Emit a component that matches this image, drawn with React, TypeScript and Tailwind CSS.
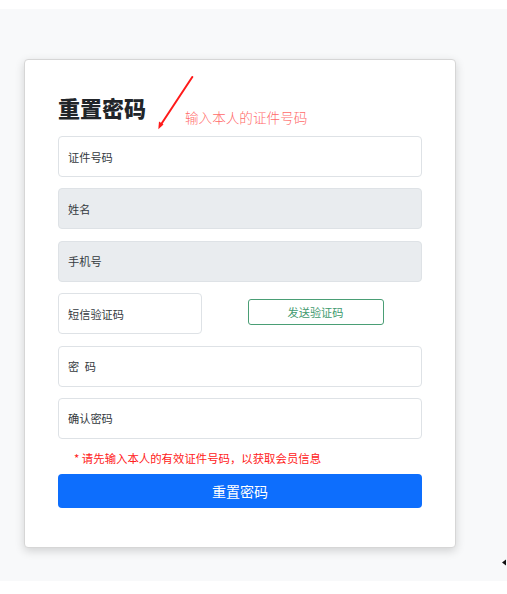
import React from 'react';

const font = { fontFamily: '"Noto Sans CJK SC", "Noto Sans", sans-serif' };

function Field({ placeholder, grey }: { placeholder: string; grey?: boolean }) {
	return (
		<input
			type="text"
			readOnly={grey}
			placeholder={placeholder}
			className={`block w-full h-[41px] px-[9px] border border-[#dee2e6] rounded-[4px] text-[11.2px] text-[#212529] placeholder:text-[#343a40] outline-none ${grey ? 'bg-[#e9ecef]' : 'bg-white'}`}
		/>
	);
}

export default function App() {
	return (
		<div className="relative w-[507px] h-[594px] bg-white" style={font}>
			<div className="mt-[9px] h-[572px] bg-[#f8f9fa] pt-[49.5px] pl-[24px]">
				<div className="relative w-[432px] h-[489px] bg-white border border-[#d6d6d6] rounded-[4px] shadow-[0_3px_10px_rgba(0,0,0,0.16)] px-[33px] pt-[34.5px]">
					<h1 className="text-[22px] leading-[26px] font-extrabold text-[#212529]">重置密码</h1>

					{/* annotation */}
					<svg className="absolute left-[130px] top-[16px]" width="40" height="56" viewBox="0 0 40 56">
						<line x1="37.3" y1="1" x2="5" y2="50" stroke="#ff1a1a" strokeWidth="2" strokeLinecap="round" />
						<polygon points="3.3,53.2 4,45.5 8.5,48.5" fill="#ff1a1a" />
					</svg>
					<span className="absolute left-[160px] top-[47px] text-[13.6px] leading-[20px] font-light text-[#ff6a6a]">
						输入本人的证件号码
					</span>

					<div className="mt-[16px] flex flex-col gap-[11.4px]">
						<Field placeholder="证件号码" />
						<Field placeholder="姓名" grey />
						<Field placeholder="手机号" grey />
						<div className="flex items-center">
							<div className="w-[144px]">
								<Field placeholder="短信验证码" />
							</div>
							<button className="ml-[45.5px] mb-[3px] w-[136px] h-[26.5px] border border-[#4a9e75] rounded-[3px] text-[11.2px] text-[#3f9a6e] bg-white">
								发送验证码
							</button>
						</div>
						<Field placeholder={'密\u2002码'} />
						<Field placeholder="确认密码" />
					</div>

					<p className="mt-[9px] pl-[16px] text-[11.4px] leading-[20px] text-[#ff2020]">
						* 请先输入本人的有效证件号码，以获取会员信息
					</p>
					<button className="mt-[6px] w-full h-[34.5px] bg-[#0d6efd] rounded-[4px] text-[14px] text-white">
						重置密码
					</button>
				</div>
			</div>
			<svg className="absolute left-[502px] top-[550px]" width="5" height="7" viewBox="0 0 5 7">
				<polygon points="0,3.5 4,0.5 4,6.5" fill="#111" />
			</svg>
		</div>
	);
}
